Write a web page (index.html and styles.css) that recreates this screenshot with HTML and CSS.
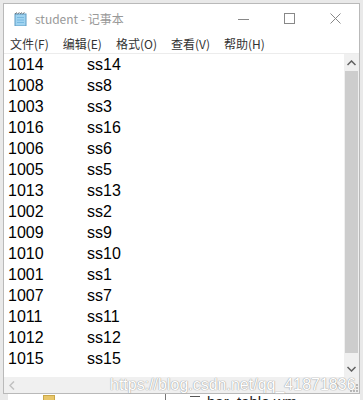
FILE: index.html
```html
<!DOCTYPE html>
<html lang="zh-CN">
<head>
    <meta charset="UTF-8">
    <title>student - 记事本</title>
    <link rel="stylesheet" href="styles.css">
</head>
<body>
    <div class="desktop">
        <div class="window">
            <!-- title bar -->
            <div class="titlebar">
                <svg class="app-icon" width="14" height="14" viewBox="0 0 14 14">
                    <rect x="2" y="2" width="11" height="12" fill="#9fd3f0" stroke="#5f9cc4" stroke-width="1"/>
                    <path d="M2 2 L4 0.5 M4.5 2 L6.5 0.5 M7 2 L9 0.5 M9.5 2 L11.5 0.5" stroke="#555" stroke-width="0.8"/>
                    <path d="M4 5.5 H11 M4 8 H11 M4 10.5 H11" stroke="#6fb2dc" stroke-width="0.8"/>
                </svg>
                <span class="title">student - 记事本</span>
                <div class="controls">
                    <span class="ctl"><svg width="12" height="12" viewBox="0 0 12 12"><path d="M0 6.5 H11" stroke="#888" stroke-width="1"/></svg></span>
                    <span class="ctl"><svg width="12" height="12" viewBox="0 0 12 12"><rect x="0.5" y="0.5" width="10" height="10" fill="none" stroke="#888" stroke-width="1"/></svg></span>
                    <span class="ctl"><svg width="12" height="12" viewBox="0 0 12 12"><path d="M0.5 0.5 L10.5 10.5 M10.5 0.5 L0.5 10.5" stroke="#888" stroke-width="1"/></svg></span>
                </div>
            </div>

            <!-- menu bar -->
            <div class="menubar">
                <span>文件(F)</span>
                <span>编辑(E)</span>
                <span>格式(O)</span>
                <span>查看(V)</span>
                <span>帮助(H)</span>
            </div>

            <!-- text area -->
            <div class="editor">
                <div class="main-row">
                    <div class="text" id="text"></div>
                    <div class="vscroll">
                        <svg class="arrow" width="9" height="6" viewBox="0 0 9 6"><path d="M0.5 5 L4.5 1 L8.5 5" fill="none" stroke="#606060" stroke-width="1.5"/></svg>
                        <div class="thumb"></div>
                        <svg class="arrow" width="9" height="6" viewBox="0 0 9 6"><path d="M0.5 1 L4.5 5 L8.5 1" fill="none" stroke="#606060" stroke-width="1.5"/></svg>
                    </div>
                </div>
                <div class="hscroll">
                    <svg class="harrow" width="6" height="9" viewBox="0 0 6 9"><path d="M5 0.5 L1 4.5 L5 8.5" fill="none" stroke="#c0c0c0" stroke-width="1.5"/></svg>
                    <div class="htrack"></div>
                    <svg class="harrow" width="6" height="9" viewBox="0 0 6 9"><path d="M1 0.5 L5 4.5 L1 8.5" fill="none" stroke="#c0c0c0" stroke-width="1.5"/></svg>
                    <div class="grip">
                        <svg width="10" height="10" viewBox="0 0 10 10">
                            <rect x="7" y="1" width="2" height="2" fill="#b8b8b8"/>
                            <rect x="4" y="4" width="2" height="2" fill="#b8b8b8"/>
                            <rect x="7" y="4" width="2" height="2" fill="#b8b8b8"/>
                            <rect x="1" y="7" width="2" height="2" fill="#b8b8b8"/>
                            <rect x="4" y="7" width="2" height="2" fill="#b8b8b8"/>
                            <rect x="7" y="7" width="2" height="2" fill="#b8b8b8"/>
                        </svg>
                    </div>
                </div>
            </div>

            <div class="watermark">https://blog.csdn.net/qq_41871836</div>
        </div>

        <!-- bits of the window behind -->
        <div class="behind">
            <span class="folder"></span>
            <span class="divider"></span>
            <span class="list-icon"></span>
            <span class="behind-text">bar_table wm</span>
        </div>
    </div>

    <script>
        // student rows as saved in the file
        const rows = [
            ['1014', 'ss14'], ['1008', 'ss8'], ['1003', 'ss3'], ['1016', 'ss16'],
            ['1006', 'ss6'], ['1005', 'ss5'], ['1013', 'ss13'], ['1002', 'ss2'],
            ['1009', 'ss9'], ['1010', 'ss10'], ['1001', 'ss1'], ['1007', 'ss7'],
            ['1011', 'ss11'], ['1012', 'ss12'], ['1015', 'ss15']
        ];
        const text = document.getElementById('text');
        rows.forEach(r => {
            const line = document.createElement('div');
            line.className = 'line';
            line.innerHTML = `<span class="id">${r[0]}</span><span class="name">${r[1]}</span>`;
            text.appendChild(line);
        });
    </script>
</body>
</html>
```

FILE: styles.css
```css
* {
    margin: 0;
    padding: 0;
    box-sizing: border-box;
}

body {
    background: #e9e9e9;
    font-family: 'Liberation Sans', 'Noto Sans CJK SC', sans-serif;
    width: 363px;
    height: 400px;
    overflow: hidden;
}

.desktop {
    padding: 3px 0 0 3px;
    position: relative;
    height: 400px;
}

.window {
    position: relative;
    width: 357px;
    height: 391px;
    border: 1px solid #b9b9b9;
    background: #fff;
    display: flex;
    flex-direction: column;
    z-index: 1;
}

/* title bar */
.titlebar {
    height: 29px;
    display: flex;
    align-items: center;
    padding-left: 9px;
}

.app-icon {
    margin-right: 8px;
    margin-top: 1px;
}

.title {
    font-size: 12px;
    color: #999;
    font-family: 'Noto Sans CJK SC', sans-serif;
}

.controls {
    margin-left: auto;
    display: flex;
}

.ctl {
    width: 46px;
    height: 29px;
    display: flex;
    align-items: center;
    justify-content: center;
}

/* menu bar */
.menubar {
    height: 20px;
    display: flex;
    align-items: center;
    gap: 14px;
    padding-left: 6px;
    font-family: 'Noto Sans CJK SC', sans-serif;
    font-size: 12px;
    color: #333;
}

/* editor */
.editor {
    border-top: 1px solid #ececec;
    flex: 1;
    display: flex;
    flex-direction: column;
}

.main-row {
    height: 323px;
    display: flex;
}

.text {
    flex: 1;
    padding-left: 4px;
    font-size: 16px;
    line-height: 21px;
    color: #000;
}

.line {
    display: flex;
}

.id {
    width: 79px;
}

.vscroll {
    width: 15px;
    background: #f0f0f0;
    display: flex;
    flex-direction: column;
    align-items: center;
}

.vscroll .arrow {
    margin: 6px 0 5px;
}

.thumb {
    width: 13px;
    flex: 1;
    background: #cdcdcd;
    margin-bottom: 7px;
}

.hscroll {
    height: 16px;
    background: #f0f0f0;
    display: flex;
    align-items: center;
}

.harrow {
    margin: 0 5px;
}

.htrack {
    flex: 1;
}

.grip {
    width: 15px;
    height: 16px;
    display: flex;
    align-items: flex-end;
    justify-content: flex-end;
}

/* overlay text on the picture */
.watermark {
    position: absolute;
    left: 106px;
    top: 372px;
    font-size: 16px;
    line-height: 17px;
    color: #fff;
    text-shadow: 0 0 1px #999, 0 0 1px #999;
    white-space: nowrap;
}

/* window behind */
.behind {
    position: absolute;
    left: 8px;
    top: 393px;
    width: 352px;
    height: 10px;
    background: #fff;
}

.folder {
    position: absolute;
    left: 35px;
    top: 2px;
    width: 12px;
    height: 8px;
    background: #e8c66a;
    border: 1px solid #c9a84a;
}

.divider {
    position: absolute;
    left: 157px;
    top: 0;
    width: 1px;
    height: 10px;
    background: #777;
}

.list-icon {
    position: absolute;
    left: 182px;
    top: 3px;
    width: 10px;
    height: 6px;
    border-top: 1px solid #555;
    border-bottom: 1px solid #555;
}

.behind-text {
    position: absolute;
    left: 199px;
    top: 1px;
    font-size: 15px;
    line-height: 16px;
    color: #222;
}
```
